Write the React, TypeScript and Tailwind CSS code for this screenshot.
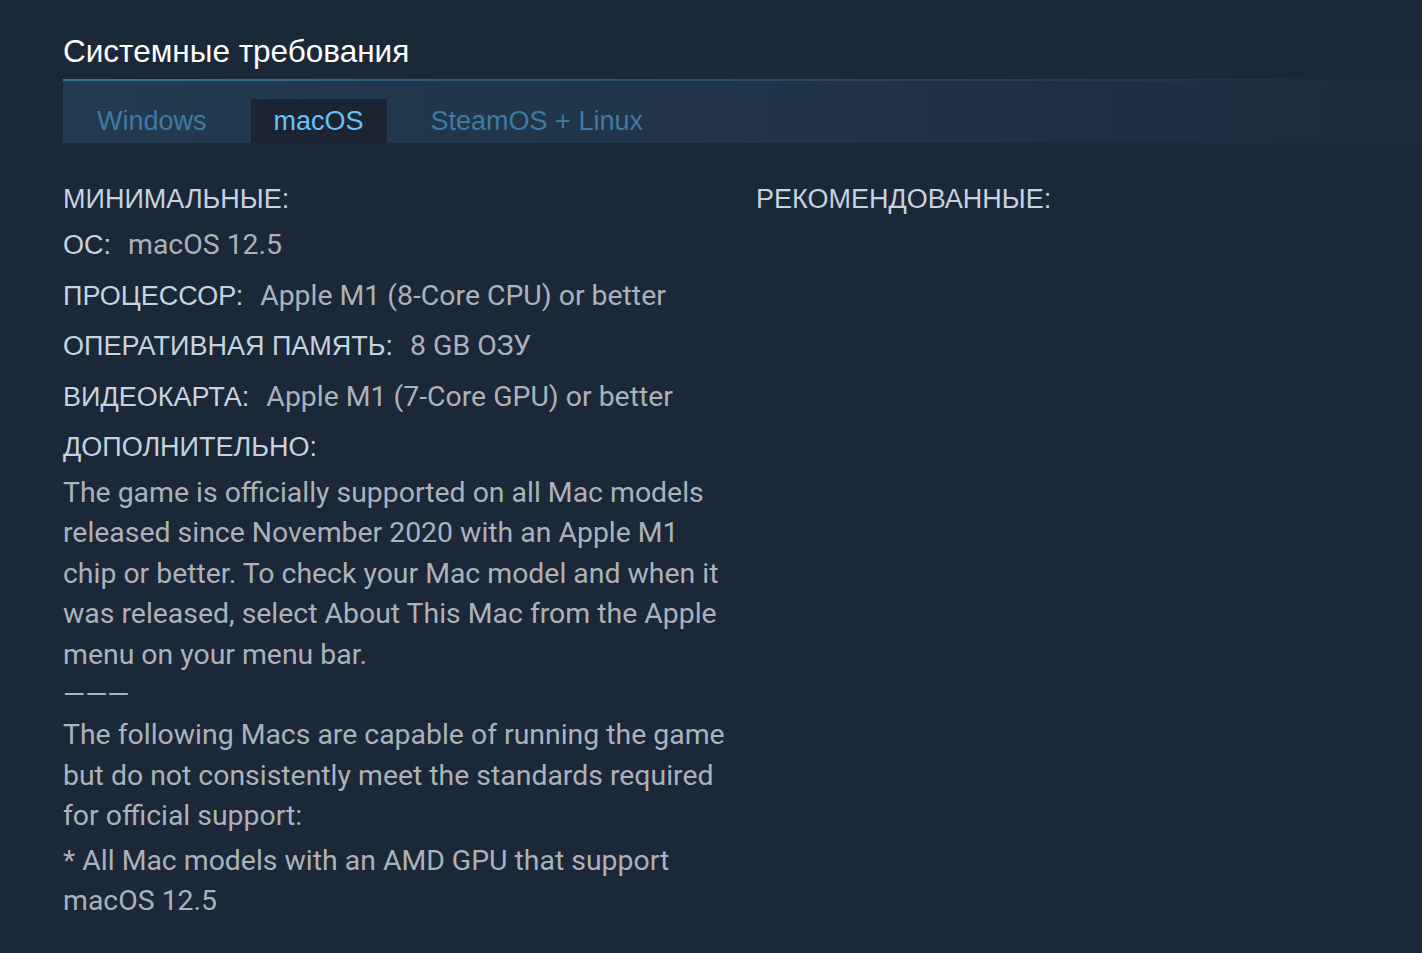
import React, { useState } from 'react';

const TABS = ['Windows', 'macOS', 'SteamOS + Linux'];

const MIN_REQS: { label: string; value: string }[] = [
  { label: 'ОС:', value: 'macOS 12.5' },
  { label: 'ПРОЦЕССОР:', value: 'Apple M1 (8-Core CPU) or better' },
  { label: 'ОПЕРАТИВНАЯ ПАМЯТЬ:', value: '8 GB ОЗУ' },
  { label: 'ВИДЕОКАРТА:', value: 'Apple M1 (7-Core GPU) or better' },
];

const App: React.FC = () => {
  const [active, setActive] = useState(1);

  return (
    <div className="min-h-[953px] bg-[#1b2838] pl-[63px] pt-[32px] pb-10 font-['Liberation_Sans',Arial,sans-serif]">
      <h2 className="text-[31.5px] leading-[38px] text-white">Системные требования</h2>

      {/* tab strip */}
      <div className="mt-[9px] h-[2px] bg-gradient-to-r from-[#3e6e91] via-[#2c4d68] to-transparent"></div>
      <div className="flex h-[62px] items-end bg-gradient-to-r from-[#233a50] via-[#213449] to-[#1d2a3b] pl-[18px]">
        {TABS.map((tab, i) => (
          <button
            key={tab}
            onClick={() => setActive(i)}
            className={`h-[44px] text-[27px] leading-[44px] ${
              active === i ? 'bg-[#1a2433] text-[#67c1f5] px-[23px] mr-[28px]' : 'text-[#3f7aa5] px-[16px] mr-[28px]'
            }`}
          >
            {tab}
          </button>
        ))}
      </div>

      <div className="mt-[36px] flex">
        <div className="w-[670px] shrink-0">
          <div className="text-[27px] leading-[40px] text-[#c6d4df]">МИНИМАЛЬНЫЕ:</div>
          <ul className="mt-[6px]">
            {MIN_REQS.map((r) => (
              <li key={r.label} className="mb-[10.5px] text-[27px] leading-[40px]">
                <span className="text-[#c6d4df]">{r.label}</span>
                <span className="ml-[17px] font-['Roboto',sans-serif] text-[28.4px] text-[#acb2b8]">{r.value}</span>
              </li>
            ))}
            <li className="text-[27px] leading-[40px]">
              <div className="text-[#c6d4df]">ДОПОЛНИТЕЛЬНО:</div>
              <div className="mt-[6px] font-['Roboto',sans-serif] text-[28.4px] leading-[40.4px] text-[#acb2b8]">
                The game is officially supported on all Mac models released since November 2020 with an Apple M1
                chip or better. To check your Mac model and when it was released, select About This Mac from the
                Apple menu on your menu bar.
                <br />
                ———
                <br />
                The following Macs are capable of running the game but do not consistently meet the standards
                required for official support:
                <div className="mt-[4px]">* All Mac models with an AMD GPU that support macOS 12.5</div>
              </div>
            </li>
          </ul>
        </div>
        <div className="ml-[23px]">
          <div className="text-[27px] leading-[40px] text-[#c6d4df]">РЕКОМЕНДОВАННЫЕ:</div>
        </div>
      </div>
    </div>
  );
};

export default App;
